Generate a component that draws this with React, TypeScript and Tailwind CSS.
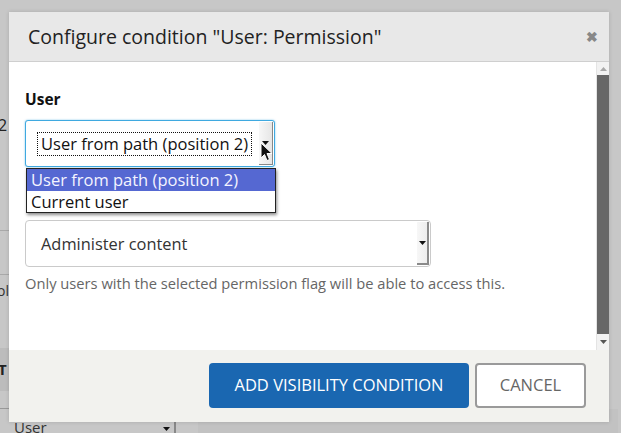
import React from "react";

const font = { fontFamily: '"Open Sans", "Noto Sans", sans-serif' };

function Caret({ className = "" }: { className?: string }) {
  return (
    <svg width="7" height="4" viewBox="0 0 7 4" className={className}>
      <path d="M0 0 H7 L3.5 4 Z" fill="#111" />
    </svg>
  );
}

function Cursor() {
  return (
    <svg width="13" height="20" viewBox="0 0 13 20" className="absolute left-[260px] top-[142px]">
      <path
        d="M1 1 L1 16 L4.5 12.5 L7 18.5 L9.5 17.5 L7 11.5 L12 11.5 Z"
        fill="#111"
        stroke="#fff"
        strokeWidth="1"
        strokeLinejoin="round"
      />
    </svg>
  );
}

function Background() {
  return (
    <div className="flex h-full w-full flex-col text-[#222]" style={font}>
      <div className="h-[116px]" />
      <div className="-ml-[2px] text-[16px] leading-[20px]">2</div>
      <div className="h-[95px]" />
      <div className="h-px w-[9px] bg-[#a9a9a9]" />
      <div className="h-[43px]" />
      <div className="h-px w-[9px] bg-[#a9a9a9]" />
      <div className="-ml-[3px] mt-[6px] text-[14px] leading-[20px] text-[#333]">ol</div>
      <div className="h-[48px]" />
      <div className="flex h-[43px] w-[9px] items-center bg-[#bcbcbc]">
        <span className="-ml-[2px] text-[15px] font-bold">T</span>
      </div>
      <div className="h-[17px]" />
      <div className="h-px w-[9px] bg-[#999]" />
      <div className="flex h-[24px] items-start">
        <div className="ml-[14px] flex h-[24px] w-[162px] items-start justify-between border-r-2 border-[#888] pt-[9px] pr-[4px] text-[15px] leading-[18px] text-[#333]">
          <span>User</span>
          <Caret className="mt-[9px]" />
        </div>
        <div className="ml-[22px] h-[24px] w-[420px] bg-[#c2c2c2]" />
      </div>
    </div>
  );
}

function UserSelect() {
  return (
    <div className="relative w-[250px]">
      <div className="flex h-[47px] items-center rounded-[3px] border border-[#3fa9e0] bg-white pl-[11px] shadow-[0_0_2px_rgba(63,169,224,0.7)]">
        <div className="border border-dotted border-[#111] px-[3px] text-[16.5px] leading-[22px] text-[#111]">
          User from path (position 2)
        </div>
        <div className="ml-auto mr-[1px] flex h-[43px] w-[14px] items-center justify-center border-r border-b border-[#888] bg-gradient-to-r from-[#f7f7f7] to-[#e6e6e6]">
          <Caret />
        </div>
      </div>
      <div className="absolute left-[1px] top-[48px] z-10 w-[250px] border border-[#222] bg-white shadow-[1px_2px_3px_rgba(0,0,0,0.45)]">
        <div className="bg-[#5568d2] pl-[4px] text-[16.5px] leading-[22px] text-[#f4f4ff]">
          User from path (position 2)
        </div>
        <div className="pl-[4px] text-[16.5px] leading-[21px] text-[#111]">Current user</div>
      </div>
    </div>
  );
}

function Dialog() {
  return (
    <div
      className="absolute left-[9px] top-[12px] flex h-[410px] w-[600px] flex-col bg-white shadow-[0_0_4px_rgba(0,0,0,0.15)]"
      style={font}
    >
      <div className="flex h-[50px] items-center border-b border-[#cfcfcf] bg-[#e8e8e8] pl-[19px] pr-[11px]">
        <h1 className="text-[19.5px] leading-[26px] text-[#222]">Configure condition "User: Permission"</h1>
        <span className="ml-auto text-[14px] font-bold leading-none text-[#888]">✖</span>
      </div>
      <div className="flex h-[288px]">
        <div className="flex-1 pl-[16px] pt-[27px]">
          <div className="text-[15.5px] font-bold leading-[20px] text-[#111]">User</div>
          <div className="mt-[11px]">
            <UserSelect />
          </div>
          <div className="mt-[53px] flex h-[47px] w-[406px] items-center rounded-[4px] border border-[#cacaca] bg-white pl-[15px] pr-[1px]">
            <span className="text-[16.4px] leading-[22px] text-[#333]">Administer content</span>
            <div className="ml-auto flex h-[43px] w-[12px] items-center justify-center border-r-2 border-b-2 border-[#8a8a8a] bg-gradient-to-r from-[#f7f7f7] to-[#ededed]">
              <Caret />
            </div>
          </div>
          <p className="mt-[6px] text-[14.7px] leading-[20px] text-[#666]">
            Only users with the selected permission flag will be able to access this.
          </p>
        </div>
        <div className="flex w-[13px] flex-col border-l border-[#e4e4e4] bg-[#f2f2f2]">
          <div className="flex h-[13px] items-center justify-center">
            <svg width="7" height="4" viewBox="0 0 7 4">
              <path d="M0 4 H7 L3.5 0 Z" fill="#a8a8a8" />
            </svg>
          </div>
          <div className="flex-1 bg-[#676767]" />
          <div className="flex h-[16px] items-center justify-center">
            <svg width="7" height="4" viewBox="0 0 7 4">
              <path d="M0 0 H7 L3.5 4 Z" fill="#555" />
            </svg>
          </div>
        </div>
      </div>
      <div className="flex flex-1 items-start justify-end gap-[6px] bg-[#f2f2ee] pr-[23px] pt-[13px]">
        <button className="h-[45px] w-[260px] rounded-[4px] bg-[#1a67b1] text-[16.5px] text-white">
          ADD VISIBILITY CONDITION
        </button>
        <button className="h-[45px] w-[111px] rounded-[4px] border-2 border-[#9a9a9a] bg-white text-[16.5px] text-[#666]">
          CANCEL
        </button>
      </div>
    </div>
  );
}

export default function App() {
  return (
    <div className="relative h-[433px] w-[621px] overflow-hidden bg-[#c7c7c7]">
      <Background />
      <Dialog />
      <Cursor />
    </div>
  );
}
